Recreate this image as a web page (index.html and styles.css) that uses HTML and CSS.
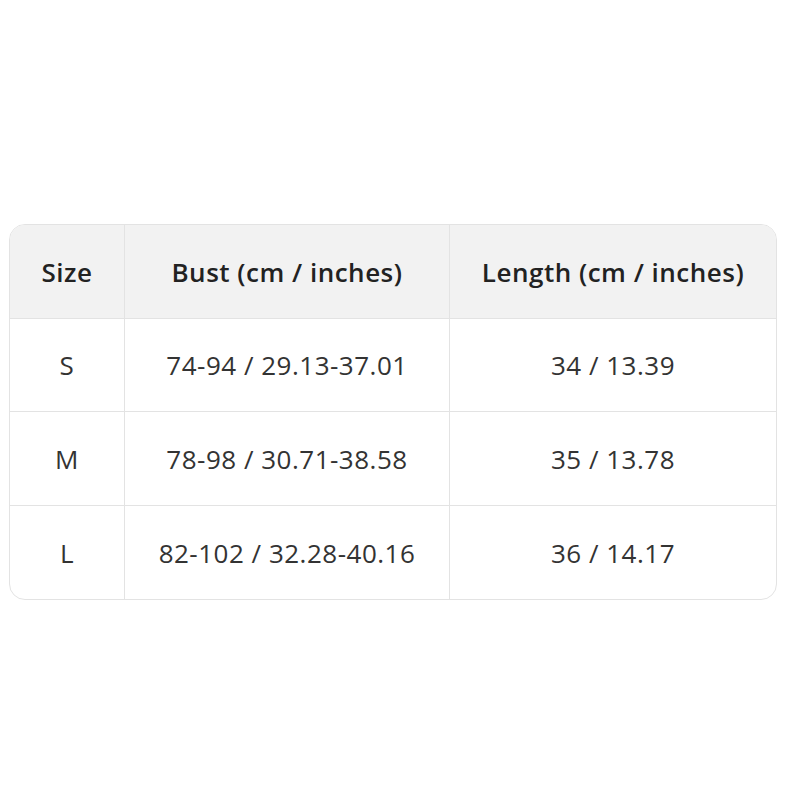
FILE: index.html
```html
<!DOCTYPE html>
<html lang="en">
<head>
  <meta charset="UTF-8" />
  <title>Size Chart</title>
  <link rel="stylesheet" href="styles.css">
</head>
<body>
  <div class="chart">
    <table class="size-table">
      <thead>
        <tr>
          <th class="col-size">Size</th>
          <th class="col-bust">Bust (cm / inches)</th>
          <th>Length (cm / inches)</th>
        </tr>
      </thead>
      <tbody>
        <tr>
          <td>S</td>
          <td>74-94 / 29.13-37.01</td>
          <td>34 / 13.39</td>
        </tr>
        <tr>
          <td>M</td>
          <td>78-98 / 30.71-38.58</td>
          <td>35 / 13.78</td>
        </tr>
        <tr>
          <td>L</td>
          <td>82-102 / 32.28-40.16</td>
          <td>36 / 14.17</td>
        </tr>
      </tbody>
    </table>
  </div>
</body>
</html>
```

FILE: styles.css
```css
body {
  margin: 0;
  padding: 224px 0 0 9px;
  background-color: #ffffff;
  font-family: "Segoe UI", "Open Sans", sans-serif;
  color: #333;
}
.chart {
  width: 768px;
  border: 1px solid #e3e3e3;
  border-radius: 16px;
  overflow: hidden;
  box-sizing: border-box;
}
.size-table {
  width: 100%;
  border-collapse: collapse;
  table-layout: fixed;
}
.size-table th,
.size-table td {
  height: 93px;
  padding: 0;
  text-align: center;
  font-size: 26px;
  letter-spacing: 0.5px;
  border-left: 1px solid #e3e3e3;
  border-top: 1px solid #e3e3e3;
}
.size-table tbody tr:first-child td {
  height: 92px;
}
.size-table th:first-child,
.size-table td:first-child {
  border-left: none;
}
.size-table thead th {
  height: 93px;
  border-top: none;
  background-color: #f2f2f2;
  font-weight: 600;
  color: #222;
}
.col-size {
  width: 114px;
}
.col-bust {
  width: 324px;
}
```
